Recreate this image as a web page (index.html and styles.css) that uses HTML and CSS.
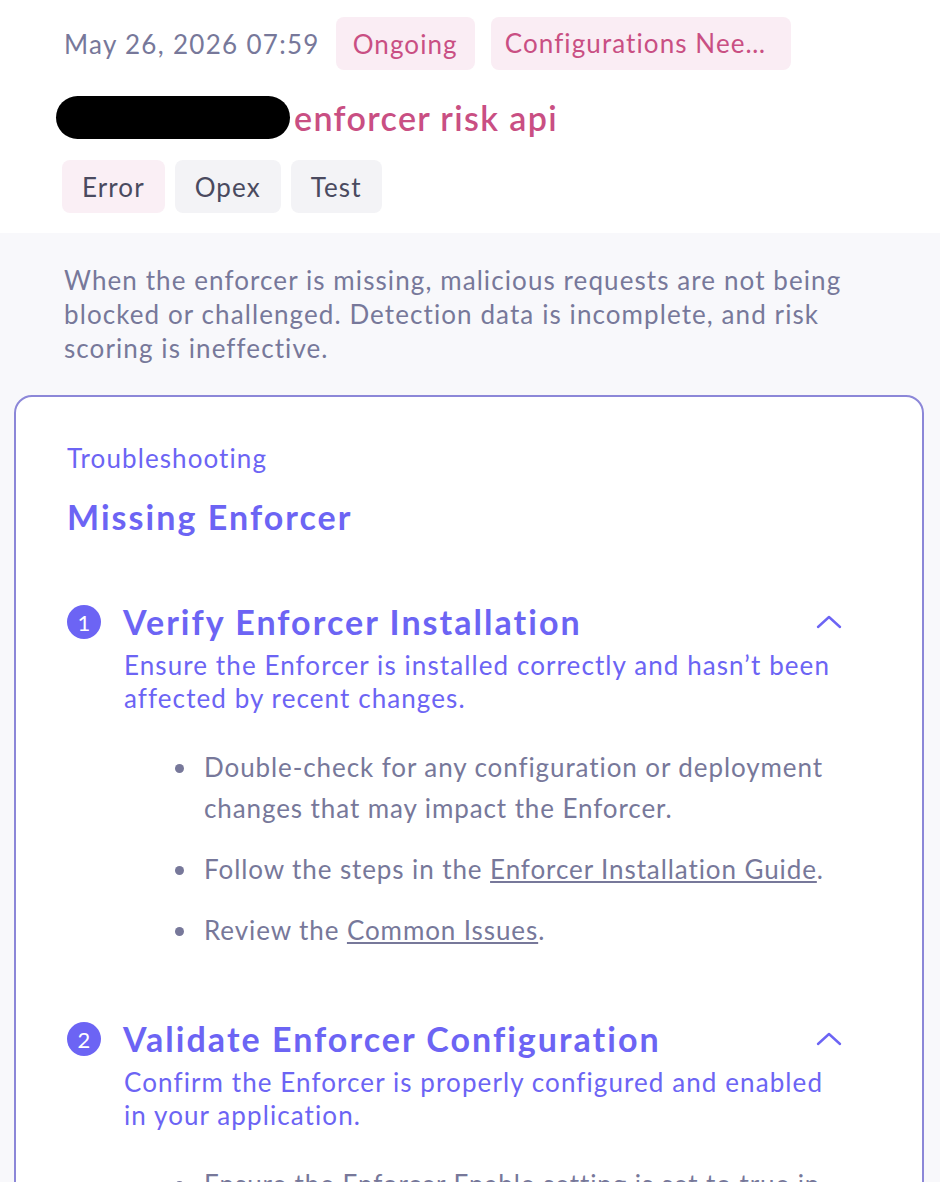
FILE: index.html
```html
<!DOCTYPE html>
<html lang="en">
<head>
    <meta charset="UTF-8">
    <meta name="viewport" content="width=device-width, initial-scale=1.0">
    <title>Incident - enforcer risk api</title>
    <link rel="stylesheet" href="styles.css">
</head>
<body>

    <header class="incident-header">
        <div class="meta-row">
            <span class="incident-date">May 26, 2026 07:59</span>
            <span class="badge">Ongoing</span>
            <span class="badge badge-wide">Configurations Needed</span>
        </div>

        <h1 class="incident-title">
            <span class="redacted"></span>enforcer risk api
        </h1>

        <div class="tag-row">
            <span class="tag tag-error">Error</span>
            <span class="tag">Opex</span>
            <span class="tag">Test</span>
        </div>
    </header>

    <p class="incident-desc">
        When the enforcer is missing, malicious requests are not being blocked or challenged. Detection data is incomplete, and risk scoring is ineffective.
    </p>

    <section class="guide">
        <div class="guide-label">Troubleshooting</div>
        <h2 class="guide-title">Missing Enforcer</h2>

        <div class="step">
            <div class="step-head">
                <span class="step-num">1</span>
                <h3 class="step-title">Verify Enforcer Installation</h3>
                <svg class="chevron" width="26" height="16" viewBox="0 0 26 16">
                    <path d="M2 13 L13 3 L24 13" fill="none" stroke="currentColor" stroke-width="2.4" stroke-linecap="round" stroke-linejoin="round"/>
                </svg>
            </div>
            <p class="step-sub">Ensure the Enforcer is installed correctly and hasn’t been affected by recent changes.</p>
            <ul class="step-list">
                <li>Double-check for any configuration or deployment changes that may impact the Enforcer.</li>
                <li>Follow the steps in the <a href="#">Enforcer Installation Guide</a>.</li>
                <li>Review the <a href="#">Common Issues</a>.</li>
            </ul>
        </div>

        <div class="step">
            <div class="step-head">
                <span class="step-num">2</span>
                <h3 class="step-title">Validate Enforcer Configuration</h3>
                <svg class="chevron" width="26" height="16" viewBox="0 0 26 16">
                    <path d="M2 13 L13 3 L24 13" fill="none" stroke="currentColor" stroke-width="2.4" stroke-linecap="round" stroke-linejoin="round"/>
                </svg>
            </div>
            <p class="step-sub">Confirm the Enforcer is properly configured and enabled in your application.</p>
            <ul class="step-list">
                <li>Ensure the Enforcer Enable setting is set to true in your configuration.</li>
                <li>Check that the correct App ID and tokens are in use.</li>
            </ul>
        </div>
    </section>

</body>
</html>
```

FILE: styles.css
```css
* {
    box-sizing: border-box;
}

body {
    font-family: 'Lato', 'Open Sans', sans-serif;
    margin: 0;
    padding: 0;
    background-color: #f8f8fb;
    color: #77789a;
    font-size: 26px;
    letter-spacing: 0.042em;
}

.incident-header {
    background-color: #fff;
    padding: 17px 0 20px 56px;
}

.meta-row {
    display: flex;
    align-items: center;
    gap: 16px;
    padding-left: 8px;
}

.incident-date {
    color: #77789a;
    letter-spacing: 0.05em;
}

.badge {
    display: inline-flex;
    align-items: center;
    height: 53px;
    padding: 0 17px;
    border-radius: 8px;
    background-color: #faedf4;
    color: #c94f83;
    white-space: nowrap;
}

.badge-wide {
    max-width: 300px;
    overflow: hidden;
    text-overflow: ellipsis;
    display: block;
    line-height: 53px;
    padding: 0 14px;
}

.incident-title {
    display: flex;
    align-items: center;
    gap: 4px;
    margin: 26px 0 0;
    font-size: 34px;
    font-weight: 600;
    color: #c94f83;
    line-height: 43px;
    letter-spacing: 0.04em;
}

.redacted {
    display: inline-block;
    width: 234px;
    height: 43px;
    border-radius: 22px;
    background-color: #000;
}

.tag-row {
    display: flex;
    gap: 10px;
    margin-top: 21px;
    padding-left: 6px;
}

.tag {
    display: inline-flex;
    align-items: center;
    height: 53px;
    padding: 0 20px;
    border-radius: 8px;
    background-color: #f3f3f6;
    color: #4a4a5f;
}

.tag-error {
    background-color: #faeff5;
}

.incident-desc {
    margin: 30px 0 30px;
    padding: 0 70px 0 64px;
    line-height: 34px;
}

.guide {
    margin: 0 16px 0 14px;
    padding: 44px 76px 40px 51px;
    background-color: #fff;
    border: 2px solid #8c87d8;
    border-radius: 18px;
    color: #6c64f4;
}

.guide-label {
    line-height: 34px;
}

.guide-title {
    margin: 20px 0 0;
    font-size: 34px;
    font-weight: 700;
    line-height: 44px;
    letter-spacing: 0.06em;
}

.step {
    margin-top: 61px;
}

.step + .step {
    margin-top: 66px;
}

.step-head {
    display: flex;
    align-items: center;
}

.step-num {
    display: inline-flex;
    align-items: center;
    justify-content: center;
    width: 34px;
    height: 34px;
    border-radius: 50%;
    background-color: #6c64f4;
    color: #fff;
    font-size: 22px;
    letter-spacing: 0;
    flex-shrink: 0;
}

.step-title {
    margin: 0 0 0 22px;
    font-size: 34px;
    font-weight: 700;
    line-height: 44px;
    letter-spacing: 0.06em;
    flex-grow: 1;
}

.chevron {
    color: #6c64f4;
    margin-right: 4px;
}

.step-sub {
    margin: 5px 0 0 57px;
    line-height: 33px;
}

.step-list {
    margin: 32px 0 0;
    padding-left: 132px;
    color: #77789a;
    line-height: 41px;
    letter-spacing: 0.035em;
}

.step-list li {
    margin-bottom: 20px;
    padding-left: 5px;
}

.step-list a {
    color: #77789a;
}
```
